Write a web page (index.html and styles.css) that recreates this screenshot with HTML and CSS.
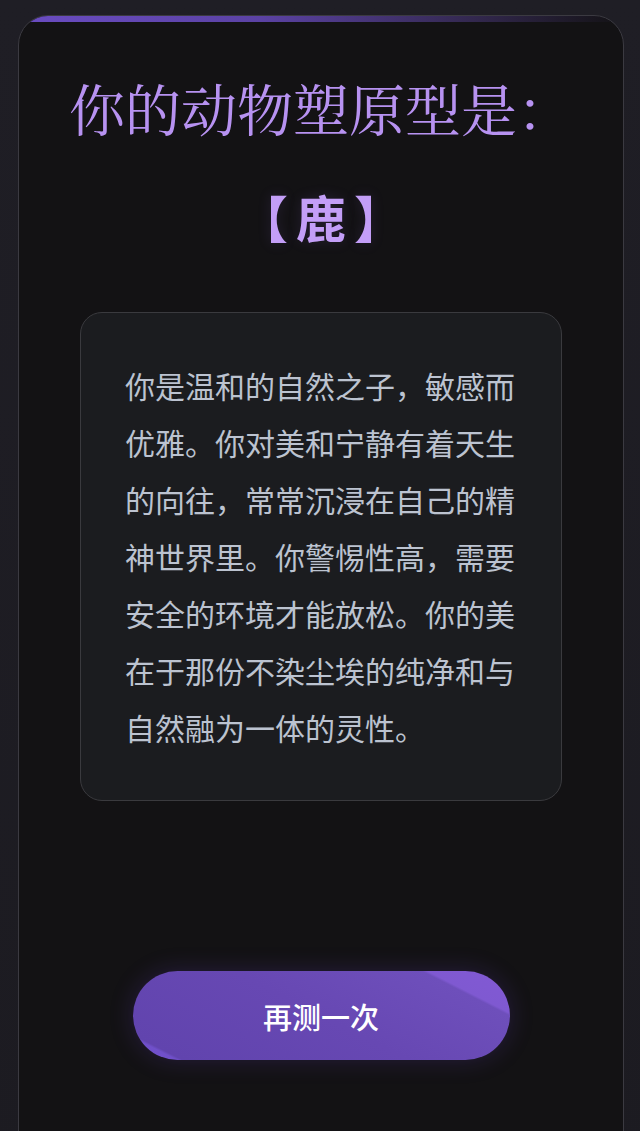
FILE: index.html
```html
<!DOCTYPE html>
<html lang="zh-CN">
<head>
    <meta charset="UTF-8">
    <meta name="viewport" content="width=device-width, initial-scale=1.0">
    <title>动物塑原型测试 - 结果</title>
    <link rel="stylesheet" href="styles.css">
</head>
<body>
    <div class="result-card">
        <h1 class="result-title">你的动物塑原型是：</h1>
        <div class="result-name"><span class="bracket">【</span>鹿<span class="bracket">】</span></div>

        <div class="result-desc">
            你是温和的自然之子，敏感而优雅。你对美和宁静有着天生的向往，常常沉浸在自己的精神世界里。你警惕性高，需要安全的环境才能放松。你的美在于那份不染尘埃的纯净和与自然融为一体的灵性。
        </div>

        <button class="retry-btn">再测一次</button>
    </div>
</body>
</html>
```

FILE: styles.css
```css
body {
    margin: 0;
    background: linear-gradient(180deg, #1f1e25 0%, #1c1b21 100%);
    font-family: "Noto Sans CJK SC", "Noto Sans", sans-serif;
    min-height: 1131px;
    overflow: hidden;
}

.result-card {
    position: relative;
    overflow: hidden;
    margin: 15px 16px 0 18px;
    min-height: 1180px;
    box-sizing: border-box;
    padding: 58px 30px 0;
    background: #131214;
    border: 1px solid #3b3a41;
    border-radius: 30px;
    text-align: center;
}

/* purple strip along the top edge */
.result-card::before {
    content: "";
    position: absolute;
    top: 0;
    left: 0;
    right: 0;
    height: 6px;
    background: linear-gradient(90deg, #6a4cc2 0%, #5b42a4 40%, #33284f 75%, rgba(40, 32, 60, 0) 100%);
}

.result-title {
    margin: 0;
    font-family: "Noto Serif CJK SC", "Noto Sans CJK SC", serif;
    font-size: 56px;
    font-weight: 400;
    line-height: 66px;
    color: #b792f1;
}

.result-name {
    margin-top: 47px;
    font-size: 50px;
    font-weight: 700;
    line-height: 58px;
    color: #c39ef7;
    text-shadow: 0 0 14px rgba(150, 110, 230, 0.15);
}

.bracket {
    display: inline-block;
    margin: 0 8px;
}

.result-desc {
    width: 482px;
    box-sizing: border-box;
    margin: 67px auto 0;
    padding: 44px 44px;
    background: #1b1c1f;
    border: 1px solid #3a3a3e;
    border-radius: 22px;
    font-size: 30px;
    line-height: 57px;
    color: #bcc3d0;
    text-align: left;
}

.retry-btn {
    display: block;
    width: 377px;
    height: 89px;
    margin: 170px auto 0;
    border: none;
    border-radius: 45px;
    background: linear-gradient(27deg, #7452d0 0%, #7050ca 8%, #6144ae 9%, #6748b3 50%, #6e4fbb 84%, #7f59d1 85%, #8259d4 100%);
    box-shadow: 0 0 24px rgba(110, 70, 210, 0.22);
    font-family: "Noto Sans CJK SC", sans-serif;
    font-size: 29px;
    font-weight: 500;
    color: #ffffff;
    cursor: pointer;
}
```
